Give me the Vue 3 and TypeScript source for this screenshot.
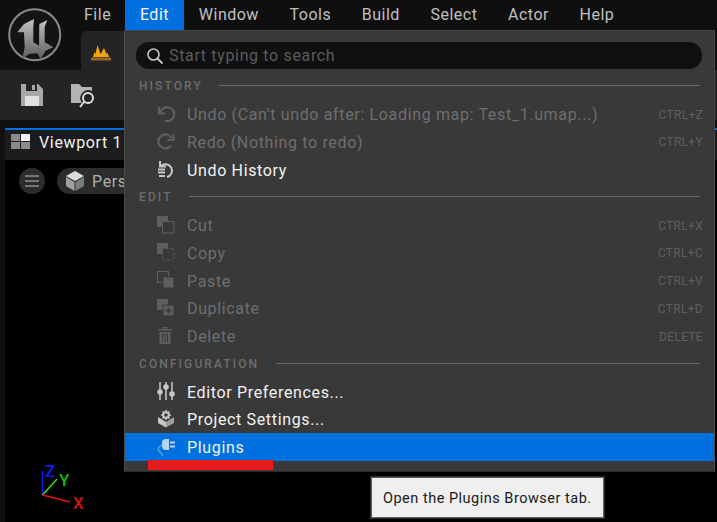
<script setup lang="ts">
type Row = { kind: 'head' | 'item'; label: string; icon?: string; keys?: string; off?: boolean; hot?: boolean }

const menus = ['File', 'Edit', 'Window', 'Tools', 'Build', 'Select', 'Actor', 'Help']

const rows: Row[] = [
  { kind: 'head', label: 'HISTORY' },
  { kind: 'item', label: "Undo (Can't undo after: Loading map: Test_1.umap...)", icon: 'undo', keys: 'CTRL+Z', off: true },
  { kind: 'item', label: 'Redo (Nothing to redo)', icon: 'redo', keys: 'CTRL+Y', off: true },
  { kind: 'item', label: 'Undo History', icon: 'history' },
  { kind: 'head', label: 'EDIT' },
  { kind: 'item', label: 'Cut', icon: 'cut', keys: 'CTRL+X', off: true },
  { kind: 'item', label: 'Copy', icon: 'copy', keys: 'CTRL+C', off: true },
  { kind: 'item', label: 'Paste', icon: 'paste', keys: 'CTRL+V', off: true },
  { kind: 'item', label: 'Duplicate', icon: 'dup', keys: 'CTRL+D', off: true },
  { kind: 'item', label: 'Delete', icon: 'trash', keys: 'DELETE', off: true },
  { kind: 'head', label: 'CONFIGURATION' },
  { kind: 'item', label: 'Editor Preferences...', icon: 'sliders' },
  { kind: 'item', label: 'Project Settings...', icon: 'project' },
  { kind: 'item', label: 'Plugins', icon: 'plug', hot: true },
]
</script>

<template>
  <div class="screen">
    <header class="top">
      <div class="logo">
        <svg width="56" height="56" viewBox="0 0 56 56">
          <defs>
            <linearGradient id="ue" x1="0" y1="0" x2="0" y2="1">
              <stop offset="0" stop-color="#c4c4c4" />
              <stop offset="1" stop-color="#5c5c5c" />
            </linearGradient>
          </defs>
          <circle cx="27.700" cy="28.700" r="25.500" fill="#141414" stroke="#8a8a8a" stroke-width="2" />
          <path d="M10.300 26.300L17 18l10-5-.7 8.300v15l5.700 3.400.3-21.700 8-4-2.600 7.300v15l8.600 5-7.600 3.400L33.700 53l-3.400-5.700L22 48l-6.700 5 2.400-11.700L17 26.300z" fill="url(#ue)" />
        </svg>
      </div>
      <div class="top-main">
        <nav class="menubar">
          <span v-for="m in menus" :key="m" class="menu-name" :class="{ open: m === 'Edit' }">{{ m }}</span>
        </nav>
        <div class="tabstrip">
          <div class="doc-tab">
            <svg width="20" height="18" viewBox="0 0 20 18">
              <path d="M2 14l1.500-5 1 2 2-9 3 9 3.500-6 2.500 6 1-1.500L18 14z" fill="#f4a408" />
              <rect y="14.500" width="20" height="3" fill="#9a6820" />
            </svg>
          </div>
        </div>
      </div>
    </header>

    <div class="toolbar">
      <svg width="24" height="24" viewBox="0 0 24 24">
        <path d="M1 1h17l5 5v17H1z" fill="#a8a8a8" />
        <rect x="6" y="1" width="11" height="7" fill="#242424" />
        <rect x="12" y="2" width="3" height="5" fill="#a8a8a8" />
        <rect x="5" y="13" width="14" height="10" fill="#e0e0e0" />
      </svg>
      <svg width="28" height="28" viewBox="0 0 28 28">
        <path d="M1 3h8l3 3h10v4a8 8 0 0 0-10 12H1z" fill="#b4b4b4" />
        <circle cx="18" cy="17" r="5" fill="none" stroke="#e0e0e0" stroke-width="2" />
        <path d="M14 21l-4 5" stroke="#e0e0e0" stroke-width="2" />
      </svg>
    </div>

    <div class="viewport">
      <div class="vp-tab">
        <svg width="20" height="16" viewBox="0 0 20 16">
          <rect width="9" height="7" fill="#8a8a8a" />
          <rect x="10" width="9" height="7" fill="#f2f2f2" />
          <rect y="8" width="9" height="7" fill="#8a8a8a" />
          <rect x="10" y="8" width="9" height="7" fill="#8a8a8a" />
        </svg>
        <span>Viewport 1</span>
      </div>
      <div class="vp-body">
        <div class="vp-tools">
          <span class="round-btn">
            <svg width="14" height="12" viewBox="0 0 14 12"><path d="M0 1h14M0 6h14M0 11h14" stroke="#c0c0c0" stroke-width="1.2" /></svg>
          </span>
          <span class="persp">
            <svg width="20" height="22" viewBox="0 0 20 22">
              <path d="M10 1l9 5-9 5-9-5z" fill="#dcdcdc" />
              <path d="M1 7l8.500 5v9L1 16z" fill="#a0a0a0" />
              <path d="M19 7l-8.500 5v9l8.500-5z" fill="#7c7c7c" />
            </svg>
            Perspective
          </span>
        </div>
        <svg class="gizmo" width="52" height="56" viewBox="0 0 52 56">
          <path d="M1.500 13v24" stroke="#0a1ff0" stroke-width="1.500" />
          <path d="M1.500 37L16 21" stroke="#35e01e" stroke-width="1.500" />
          <path d="M1.500 37L29 44" stroke="#e81010" stroke-width="1.500" />
          <text x="4" y="19" class="axis" fill="#0a1ff0">Z</text>
          <text x="18" y="28" class="axis" fill="#0fbf0f">Y</text>
          <text x="32" y="51" class="axis" fill="#d81010">X</text>
        </svg>
      </div>
    </div>

    <div class="menu">
      <div class="search">
        <svg width="18" height="18" viewBox="0 0 18 18">
          <circle cx="7.500" cy="7.500" r="5.500" fill="none" stroke="#c8c8c8" stroke-width="1.600" />
          <path d="M11.500 11.500l5 5" stroke="#c8c8c8" stroke-width="1.800" />
        </svg>
        <span>Start typing to search</span>
      </div>
      <template v-for="r in rows" :key="r.label">
        <div v-if="r.kind === 'head'" class="head">
          <span>{{ r.label }}</span><i></i>
        </div>
        <div v-else class="item" :class="{ off: r.off, hot: r.hot }">
          <svg class="ico" width="18" height="18" viewBox="0 0 18 18">
            <g v-if="r.icon === 'undo'" fill="none" stroke="currentColor" stroke-width="2.200">
              <path d="M3.500 7A7 7 0 1 1 8 15.800" /><path d="M2 2v6.300h6" />
            </g>
            <g v-else-if="r.icon === 'redo'" fill="none" stroke="currentColor" stroke-width="2.200">
              <path d="M14.500 6A7 7 0 1 0 14 13.500" /><path d="M16.500 2v6h-6" />
            </g>
            <g v-else-if="r.icon === 'history'" fill="none" stroke="currentColor" stroke-width="2">
              <path d="M4 6a6.500 6.500 0 1 1 6 11" /><path d="M3 1v5.500h6" /><path d="M1 9.500h7M1 12.500h7M2 16h6" />
            </g>
            <g v-else-if="r.icon === 'cut'">
              <rect x="0" y="0" width="11" height="11" fill="currentColor" />
              <rect x="5.500" y="5.500" width="11.500" height="11.500" fill="#393939" stroke="currentColor" />
            </g>
            <g v-else-if="r.icon === 'copy'">
              <rect x="0" y="0" width="11" height="11" fill="currentColor" />
              <rect x="5.500" y="5.500" width="11.500" height="11.500" fill="#393939" stroke="currentColor" stroke-dasharray="2 2" />
            </g>
            <g v-else-if="r.icon === 'paste'">
              <rect x="0.500" y="0.500" width="11" height="11" fill="none" stroke="currentColor" />
              <rect x="6" y="6" width="11" height="11" fill="currentColor" stroke="#393939" />
            </g>
            <g v-else-if="r.icon === 'dup'">
              <rect x="0" y="0" width="11" height="11" fill="currentColor" />
              <rect x="6" y="6" width="11" height="11" fill="currentColor" stroke="#393939" />
              <path d="M8.500 11.500h6M11.500 8.500v6" stroke="#393939" stroke-width="1.500" />
            </g>
            <g v-else-if="r.icon === 'trash'" fill="currentColor">
              <rect x="1" y="2" width="14" height="1.500" />
              <rect x="5.500" y="0" width="5" height="1.500" />
              <path d="M2.500 5h11v12h-11zM5 6.500v9h1v-9zM7.500 6.500v9h1v-9zM10 6.500v9h1v-9z" fill-rule="evenodd" />
            </g>
            <g v-else-if="r.icon === 'sliders'" stroke="currentColor" stroke-width="1.500" fill="currentColor">
              <path d="M3 0v18M9 0v18M15 0v18" />
              <circle cx="3" cy="10" r="2" /><circle cx="9" cy="5" r="2" /><circle cx="15" cy="12" r="2" />
            </g>
            <g v-else-if="r.icon === 'project'" fill="currentColor">
              <circle cx="9" cy="5" r="2.800" fill="none" stroke="currentColor" stroke-width="2" />
              <path d="M9 0v2M9 8v2M4 5h2M12 5h2M5.500 1.500l1.500 1.500M12.500 1.500L11 3M5.500 8.500L7 7M12.500 8.500L11 7" stroke="currentColor" stroke-width="1.500" />
              <path d="M1 7l8 5v5.500l-8-4.500z" />
              <path d="M17 7l-8 5v5.500l8-4.500z" opacity="0.700" />
            </g>
            <g v-else-if="r.icon === 'plug'">
              <path d="M9 1h3v11H9a4 4 0 0 1-4-3V5a4 4 0 0 1 4-4z" fill="#b8d4f4" />
              <path d="M13 3.500h5v2h-5zM13 7.500h5v2h-5z" fill="#b8d4f4" />
              <path d="M5 7C1 9 0 12 3 14c1.500 1 3 2 2 4" fill="none" stroke="#5aa8f0" stroke-width="1.300" />
            </g>
          </svg>
          <span class="label">{{ r.label }}</span>
          <span v-if="r.keys" class="keys">{{ r.keys }}</span>
        </div>
      </template>
      <div class="marker"></div>
    </div>

    <div class="tip">Open the Plugins Browser tab.</div>
  </div>
</template>

<style>
html, body { margin: 0; background: #000; }
</style>

<style scoped>
.screen {
  position: relative;
  width: 717px;
  height: 522px;
  overflow: hidden;
  background: #111;
  font-family: Roboto, "Liberation Sans", sans-serif;
  font-size: 16px;
  letter-spacing: 0.65px;
  color: #c0c0c0;
}

.top {
  display: flex;
  height: 70px;
  background: #0f0f0f;
}

.logo {
  width: 67px;
  flex: none;
  padding: 6px 0 0 7px;
  box-sizing: border-box;
}

.top-main {
  flex: 1;
  display: flex;
  flex-direction: column;
}

.menubar {
  display: flex;
  height: 31px;
  letter-spacing: 0.5px;
}

.menu-name {
  padding: 0 15.3px;
  line-height: 29px;
}

.menu-name:first-child {
  padding: 0 13.500px 0 17px;
}

.menu-name.open {
  background: #0070e0;
  color: #f4f4f4;
  padding-right: 14.500px;
}

.tabstrip {
  flex: 1;
  padding-left: 14px;
}

.doc-tab {
  width: 120px;
  height: 39px;
  background: #242424;
  border-radius: 6px 6px 0 0;
  padding: 12px 0 0 10px;
  box-sizing: border-box;
}

.toolbar {
  display: flex;
  align-items: center;
  gap: 26px;
  height: 50px;
  padding-left: 20px;
  background: #242424;
}

.viewport {
  margin: 8px 0 0 5px;
  height: 394px;
  display: flex;
  flex-direction: column;
  background: #000;
}

.vp-tab {
  display: flex;
  align-items: center;
  gap: 8px;
  height: 32px;
  padding: 0 0 6px 6px;
  background: #1c1c1c;
  border-top: 2px solid #0070e0;
  box-sizing: border-box;
  color: #f0f0f0;
}

.vp-body {
  flex: 1;
  position: relative;
  padding: 8px 0 0 14px;
}

.vp-tools {
  display: flex;
  align-items: center;
  gap: 12px;
}

.round-btn {
  width: 26px;
  height: 26px;
  border-radius: 50%;
  background: #2c2c2c;
  display: flex;
  align-items: center;
  justify-content: center;
}

.persp {
  display: flex;
  align-items: center;
  gap: 7px;
  height: 26px;
  padding: 0 12px 0 8px;
  border-radius: 13px;
  background: #2c2c2c;
  color: #b0b0b0;
}

.gizmo {
  position: absolute;
  left: 36px;
  top: 298px;
}

.axis {
  font-size: 17px;
  font-weight: 500;
  letter-spacing: 0;
}

.menu {
  position: absolute;
  left: 124px;
  top: 30px;
  width: 591px;
  height: 442px;
  box-sizing: border-box;
  padding-top: 11px;
  background: #393939;
  border: 1px solid #4a4a4a;
  border-top-color: #444;
  border-bottom-color: #2a2a2a;
}

.search {
  display: flex;
  align-items: center;
  gap: 5px;
  height: 27px;
  margin: 0 12px 3px 11px;
  padding-left: 10px;
  border-radius: 13px;
  background: #101010;
  color: #5c5c5c;
}

.head {
  display: flex;
  align-items: center;
  gap: 16.500px;
  height: 27.75px;
  padding: 0 14px;
  font-size: 12px;
  font-weight: 500;
  letter-spacing: 2.100px;
  color: #6c6c6c;
}

.head span {
  padding-top: 1px;
}

.head i {
  flex: 1;
  height: 1px;
  background: #6a6a6a;
}

.item {
  display: flex;
  align-items: center;
  height: 27.75px;
  padding: 0 11px 0 32px;
  color: #f2f2f2;
}

.ico {
  flex: none;
  margin-right: 12px;
  color: #c8c8c8;
}

.item.off {
  color: #6e6e6e;
}

.item.off .ico {
  color: #5e5e5e;
}

.item.hot {
  background: #0070e0;
}

.label {
  flex: 1;
  padding-top: 2px;
}

.keys {
  padding-top: 2px;
  font-size: 12px;
  letter-spacing: 0.3px;
  color: #5f5f5f;
}

.marker {
  position: absolute;
  left: 23px;
  top: 429px;
  width: 125px;
  height: 10px;
  background: #e81c1c;
}

.tip {
  position: absolute;
  left: 371px;
  top: 477px;
  width: 233px;
  height: 41px;
  box-sizing: border-box;
  padding-left: 11px;
  line-height: 41px;
  background: #efefef;
  border: 1px solid #5c5c5c;
  outline: 1px solid #2a2a2a;
  color: #1a1a1a;
  font-size: 14.5px;
  letter-spacing: 0.5px;
}
</style>
